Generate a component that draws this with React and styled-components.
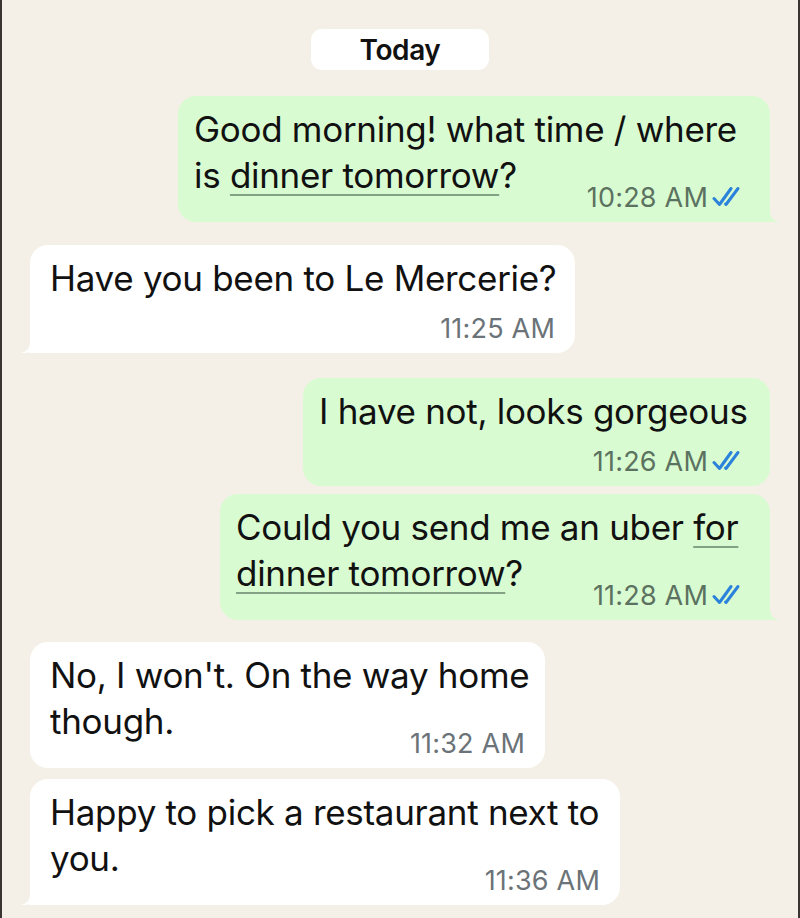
import React from 'react'
import styled, { createGlobalStyle } from 'styled-components'

const GlobalStyle = createGlobalStyle`
  html, body {
    margin: 0;
    padding: 0;
    background: #f4f0e7;
  }
  * { box-sizing: border-box; }
`

const messages = [
  {
    id: 1, out: true, w: 592, gap: 26, tail: true, inline: true,
    lines: [['Good morning! what time / where'], ['is ', { link: 'dinner tomorrow' }, '?']],
    time: '10:28 AM',
  },
  {
    id: 2, out: false, w: 545, gap: 23, tail: true,
    lines: [['Have you been to Le Mercerie?']],
    time: '11:25 AM',
  },
  {
    id: 3, out: true, w: 467, gap: 25,
    lines: [['I have not, looks gorgeous']],
    time: '11:26 AM',
  },
  {
    id: 4, out: true, w: 550, gap: 8, tail: true, inline: true,
    lines: [['Could you send me an uber ', { link: 'for' }], [{ link: 'dinner tomorrow' }, '?']],
    time: '11:28 AM',
  },
  {
    id: 5, out: false, w: 515, gap: 22, inline: true,
    lines: [["No, I won't. On the way home"], ['though.']],
    time: '11:32 AM',
  },
  {
    id: 6, out: false, w: 590, gap: 11, tail: true, inline: true,
    lines: [['Happy to pick a restaurant next to'], ['you.']],
    time: '11:36 AM',
  },
]

function Ticks() {
  return (
    <TickIcon viewBox="0 0 30 24" width="30" height="24">
      <path d="M2 13.5 L7.5 19.5 L19 3.5" />
      <path d="M13.5 19 L14 19.5 L26 3.5" />
    </TickIcon>
  )
}

function Message({ msg }) {
  return (
    <Row $out={msg.out} $gap={msg.gap}>
      <Bubble $out={msg.out} $w={msg.w} $tail={msg.tail}>
        <Text>
          {msg.lines.map((line, i) => (
            <Line key={i}>
              {line.map((part, j) =>
                typeof part === 'string' ? part : <Link key={j}>{part.link}</Link>
              )}
            </Line>
          ))}
        </Text>
        <Meta $out={msg.out} $inline={msg.inline}>
          <span>{msg.time}</span>
          {msg.out && <Ticks />}
        </Meta>
      </Bubble>
    </Row>
  )
}

export default function App() {
  return (
    <Page>
      <GlobalStyle />
      <DayRow>
        <DayPill>Today</DayPill>
      </DayRow>
      {messages.map((m) => (
        <Message key={m.id} msg={m} />
      ))}
    </Page>
  )
}

const Page = styled.div`
  height: 918px;
  overflow: hidden;
  background: #f4f0e7;
  border-left: 2px solid #3b3531;
  border-right: 2px solid #3b3531;
  padding: 29px 28px 0;
  display: flex;
  flex-direction: column;
  font-family: Inter, "Liberation Sans", sans-serif;
  color: #111;
`

const DayRow = styled.div`
  display: flex;
  justify-content: center;
`

const DayPill = styled.div`
  width: 178px;
  height: 41px;
  border-radius: 11px;
  background: #fff;
  display: flex;
  align-items: center;
  justify-content: center;
  font-size: 28px;
  font-weight: 600;
  letter-spacing: -0.4px;
`

const Row = styled.div`
  display: flex;
  justify-content: ${(p) => (p.$out ? 'flex-end' : 'flex-start')};
  margin-top: ${(p) => p.$gap}px;
`

const Bubble = styled.div`
  position: relative;
  width: ${(p) => p.$w}px;
  padding: 10px ${(p) => (p.$out ? 32 : 20)}px 10px ${(p) => (p.$out ? 16 : 20)}px;
  background: ${(p) => (p.$out ? '#d9fbd1' : '#ffffff')};
  border-radius: 18px;
  ${(p) =>
    p.$tail &&
    (p.$out ? 'border-bottom-right-radius: 0;' : 'border-bottom-left-radius: 0;')}

  &::before,
  &::after {
    content: '';
    display: ${(p) => (p.$tail ? 'block' : 'none')};
    position: absolute;
    bottom: 0;
    height: 22px;
  }
  &::before {
    width: 20px;
    background: ${(p) => (p.$out ? '#d9fbd1' : '#ffffff')};
    ${(p) =>
      p.$out
        ? 'right: -9px; border-bottom-left-radius: 16px 14px;'
        : 'left: -9px; border-bottom-right-radius: 16px 14px;'}
  }
  &::after {
    width: 10px;
    background: #f4f0e7;
    ${(p) =>
      p.$out
        ? 'right: -10px; border-bottom-left-radius: 10px;'
        : 'left: -10px; border-bottom-right-radius: 10px;'}
  }
`

const Text = styled.div`
  font-size: 35px;
  line-height: 46px;
  letter-spacing: -0.3px;
`

const Line = styled.div`
  white-space: nowrap;
`

const Link = styled.span`
  text-decoration: underline;
  text-decoration-color: #86a286;
  text-decoration-thickness: 2px;
  text-underline-offset: 6px;
`

const Meta = styled.div`
  display: flex;
  align-items: center;
  justify-content: flex-end;
  gap: 4px;
  height: 30px;
  margin-right: ${(p) => (p.$out ? -4 : 0)}px;
  margin-top: ${(p) => (p.$inline ? '-16px' : '12px')};
  font-size: 27px;
  color: ${(p) => (p.$out ? '#5c7260' : '#6b7378')};
  letter-spacing: 0.2px;
`

const TickIcon = styled.svg`
  flex-shrink: 0;
  fill: none;
  stroke: #2b82da;
  stroke-width: 3;
  stroke-linecap: round;
  stroke-linejoin: round;
`
